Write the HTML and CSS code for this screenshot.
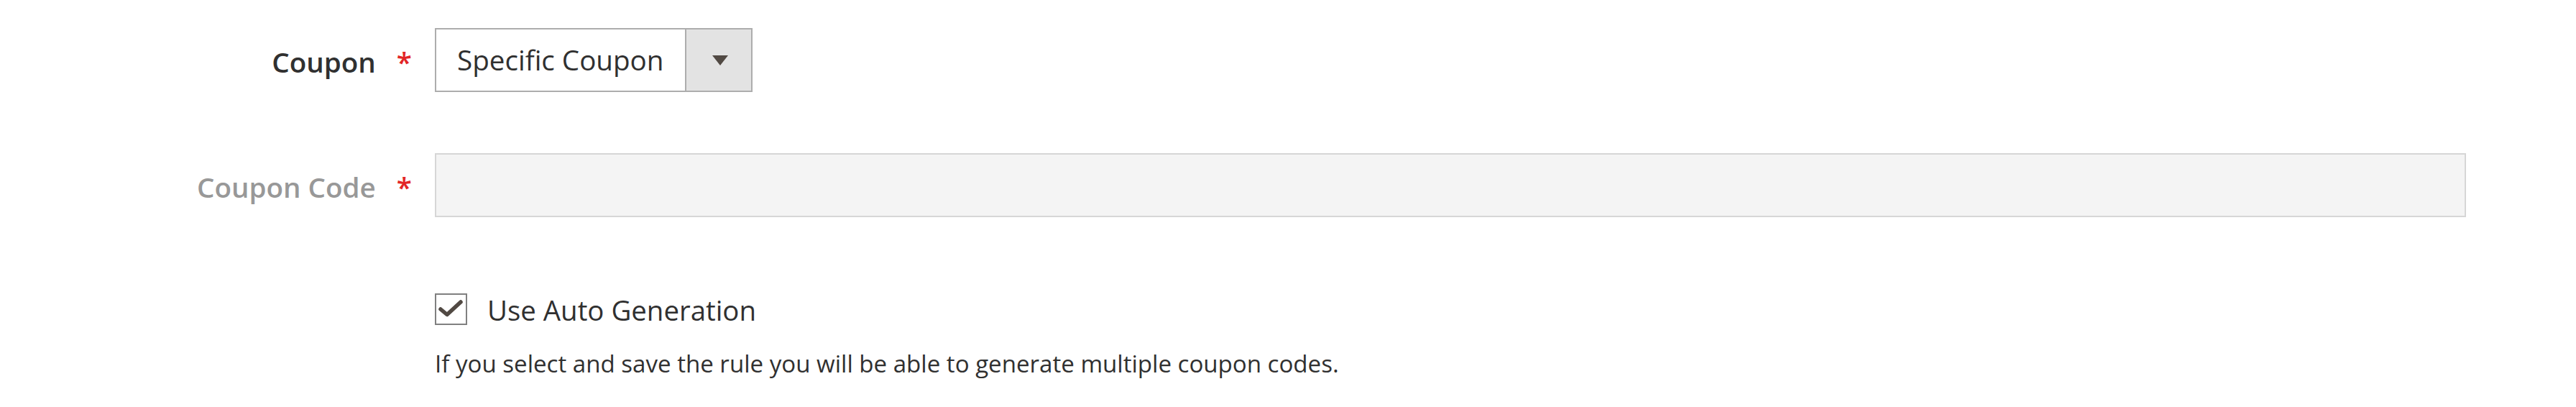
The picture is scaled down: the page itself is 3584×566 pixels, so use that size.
FILE: index.html
```html
<!DOCTYPE html>
<html lang="en">
<head>
<meta charset="utf-8">
<title>Coupon</title>
<link rel="stylesheet" href="styles.css">
</head>
<body>
<form class="form">
  <div class="field">
    <div class="label-col"><span class="label">Coupon</span><span class="req">*</span></div>
    <div class="control">
      <div class="select">
        <span class="select-value">Specific Coupon</span>
        <span class="select-btn">
          <svg width="22" height="14" viewBox="0 0 22 14"><polygon points="0,0 22,0 11,14" fill="#514943"/></svg>
        </span>
      </div>
    </div>
  </div>
  <div class="field field-disabled">
    <div class="label-col"><span class="label">Coupon Code</span><span class="req">*</span></div>
    <div class="control">
      <input class="text-input" type="text" disabled>
    </div>
  </div>
  <div class="field field-choice">
    <div class="label-col"></div>
    <div class="control">
      <label class="checkbox-row">
        <span class="checkbox">
          <svg width="45" height="44" viewBox="0 0 45 44"><polyline points="8,22 17,29.5 36,12" fill="none" stroke="#514943" stroke-width="5.5" stroke-linecap="round" stroke-linejoin="round"/></svg>
        </span>
        <span class="checkbox-label">Use Auto Generation</span>
      </label>
      <div class="note">If you select and save the rule you will be able to generate multiple coupon codes.</div>
    </div>
  </div>
</form>
</body>
</html>
```

FILE: styles.css
```css
html, body {
  margin: 0;
  padding: 0;
  background: #ffffff;
}

body {
  font-family: "Open Sans", "Liberation Sans", sans-serif;
  color: #303030;
  width: 3584px;
  height: 566px;
  overflow: hidden;
}

.form {
  display: flex;
  flex-direction: column;
  padding-top: 39px;
}

.field {
  display: flex;
  align-items: flex-start;
}

.field + .field {
  margin-top: 85px;
}

.field-choice {
  margin-top: 106px !important;
}

.label-col {
  width: 605px;
  box-sizing: border-box;
  padding-right: 32px;
  padding-top: 22px;
  display: flex;
  justify-content: flex-end;
  align-items: baseline;
  font-size: 38.6px;
  line-height: 51px;
  font-weight: 600;
  color: #303030;
}

.field-disabled .label {
  color: #989898;
}

.req {
  color: #e22626;
  margin-left: 29px;
  font-weight: 600;
}

.control {
  display: flex;
  flex-direction: column;
}

.select {
  width: 442px;
  height: 89px;
  box-sizing: border-box;
  border: 2px solid #adadad;
  display: flex;
  align-items: stretch;
  background: #ffffff;
}

.select-value {
  flex: 1;
  padding-left: 29px;
  display: flex;
  align-items: center;
  font-size: 38.6px;
  line-height: 51px;
  color: #303030;
}

.select-btn {
  width: 90px;
  border-left: 2px solid #adadad;
  background: #e3e3e3;
  display: flex;
  align-items: center;
  justify-content: center;
}

.select-btn svg {
  display: block;
  margin-left: 4px;
}

.text-input {
  -webkit-appearance: none;
  appearance: none;
  display: block;
  margin: 0;
  width: 2826px;
  height: 89px;
  box-sizing: border-box;
  border: 2px solid #d6d6d6;
  border-radius: 0;
  background: #f4f4f4;
  outline: none;
}

.checkbox-row {
  display: flex;
  align-items: center;
  gap: 28px;
  height: 44px;
}

.checkbox {
  width: 45px;
  height: 44px;
  box-sizing: border-box;
  border: 2px solid #808080;
  background: #ffffff;
  position: relative;
  flex: none;
}

.checkbox svg {
  position: absolute;
  left: -2px;
  top: -2px;
  display: block;
}

.checkbox-label {
  font-size: 38.4px;
  line-height: 51px;
  color: #303030;
  margin-top: 2px;
}

.note {
  margin-top: 32px;
  font-size: 33.1px;
  line-height: 44px;
  color: #303030;
}
```
